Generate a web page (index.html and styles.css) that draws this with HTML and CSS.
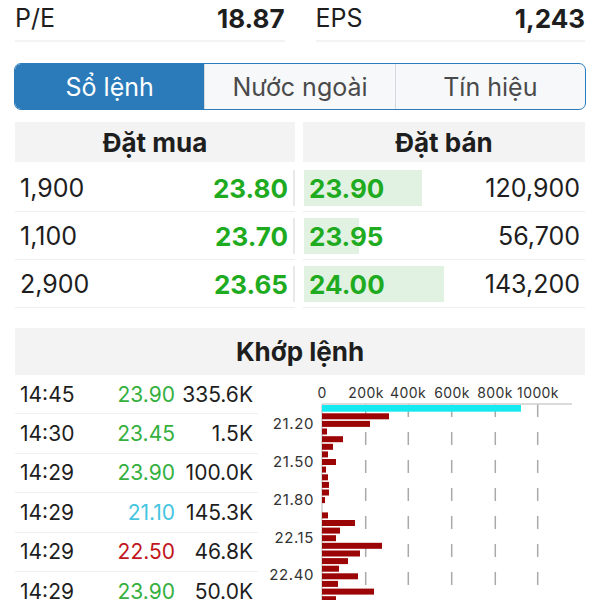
FILE: index.html
```html
<!DOCTYPE html>
<html>
<head lang="vi">
    <meta charset="UTF-8">
    <title>Sổ lệnh</title>
    <link rel="stylesheet" href="styles.css">
</head>
<body>
<div class="page">

    <div class="stats">
        <div class="stat"><span>P/E</span><span class="stat-value">18.87</span></div>
        <div class="stat"><span>EPS</span><span class="stat-value">1,243</span></div>
    </div>

    <div class="tabs">
        <div class="tab active">Sổ lệnh</div>
        <div class="tab">Nước ngoài</div>
        <div class="tab">Tín hiệu</div>
    </div>

    <div class="book">
        <div class="side buy">
            <div class="side-head">Đặt mua</div>
            <div class="book-row"><div class="cell"><span>1,900</span><span class="price">23.80</span></div></div>
            <div class="book-row"><div class="cell"><span>1,100</span><span class="price">23.70</span></div></div>
            <div class="book-row"><div class="cell"><span>2,900</span><span class="price">23.65</span></div></div>
        </div>
        <div class="side sell">
            <div class="side-head">Đặt bán</div>
            <div class="book-row"><div class="cell"><i class="fill" style="width: 41.9%"></i><span class="price">23.90</span><span>120,900</span></div></div>
            <div class="book-row"><div class="cell"><i class="fill" style="width: 19.6%"></i><span class="price">23.95</span><span>56,700</span></div></div>
            <div class="book-row"><div class="cell"><i class="fill" style="width: 49.6%"></i><span class="price">24.00</span><span>143,200</span></div></div>
        </div>
    </div>

    <div class="trades">
        <div class="trades-head">Khớp lệnh</div>
        <div class="trades-body">
            <div class="tape">
                <div class="trade"><span>14:45</span><span class="up">23.90</span><span>335.6K</span></div>
                <div class="trade"><span>14:30</span><span class="up">23.45</span><span>1.5K</span></div>
                <div class="trade"><span>14:29</span><span class="up">23.90</span><span>100.0K</span></div>
                <div class="trade"><span>14:29</span><span class="floor">21.10</span><span>145.3K</span></div>
                <div class="trade"><span>14:29</span><span class="down">22.50</span><span>46.8K</span></div>
                <div class="trade"><span>14:29</span><span class="up">23.90</span><span>50.0K</span></div>
            </div>

            <svg class="chart" width="315" height="225" viewBox="0 0 315 225">
                <g class="axis-label" text-anchor="middle">
                    <text x="52" y="23">0</text>
                    <text x="96" y="23">200k</text>
                    <text x="138" y="23">400k</text>
                    <text x="182" y="23">600k</text>
                    <text x="225" y="23">800k</text>
                    <text x="268" y="23">1000k</text>
                </g>
                <g class="grid">
                    <line x1="95.7" y1="29" x2="95.7" y2="225"/>
                    <line x1="138.3" y1="29" x2="138.3" y2="225"/>
                    <line x1="181.7" y1="29" x2="181.7" y2="225"/>
                    <line x1="225.3" y1="29" x2="225.3" y2="225"/>
                    <line x1="267.7" y1="29" x2="267.7" y2="225"/>
                </g>
                <line class="axis" x1="52" y1="29" x2="302" y2="29"/>
                <line class="axis" x1="52" y1="29" x2="52" y2="225"/>

                <rect class="bar-now" x="52" y="30" width="199" height="6.7"/>

                <g class="bars">
                    <rect x="52" y="38.3" width="67" height="6"/>
                    <rect x="52" y="45.9" width="48" height="6"/>
                    <rect x="52" y="53.5" width="5" height="6"/>
                    <rect x="52" y="61.2" width="21" height="6"/>
                    <rect x="52" y="68.8" width="11" height="6"/>
                    <rect x="52" y="76.4" width="6" height="6"/>
                    <rect x="52" y="84" width="14" height="6"/>
                    <rect x="52" y="91.6" width="4" height="6"/>
                    <rect x="52" y="99.3" width="6" height="6"/>
                    <rect x="52" y="106.9" width="7" height="6"/>
                    <rect x="52" y="114.5" width="7" height="6"/>
                    <rect x="52" y="122.1" width="3" height="6"/>
                    <rect x="52" y="137.4" width="6" height="6"/>
                    <rect x="52" y="145" width="33" height="6"/>
                    <rect x="52" y="152.6" width="18" height="6"/>
                    <rect x="52" y="160.2" width="14" height="6"/>
                    <rect x="52" y="167.8" width="60" height="6"/>
                    <rect x="52" y="175.5" width="38" height="6"/>
                    <rect x="52" y="183.1" width="26" height="6"/>
                    <rect x="52" y="190.7" width="17" height="6"/>
                    <rect x="52" y="198.3" width="36" height="6"/>
                    <rect x="52" y="205.9" width="16" height="6"/>
                    <rect x="52" y="213.6" width="52" height="6"/>
                    <rect x="52" y="221.2" width="14" height="6"/>
                </g>

                <g class="price-label" text-anchor="end">
                    <text x="44" y="54.3">21.20</text>
                    <text x="44" y="91.7">21.50</text>
                    <text x="44" y="130">21.80</text>
                    <text x="44" y="167.7">22.15</text>
                    <text x="44" y="205">22.40</text>
                </g>
            </svg>
        </div>
    </div>

</div>
</body>
</html>
```

FILE: styles.css
```css
*
{
    margin: 0;
    padding: 0;
    box-sizing: border-box;
}
body
{
    font-family: Inter, Roboto, "Liberation Sans", sans-serif;
    color: #1e1e1e;
    background: #fff;
    width: 600px;
    height: 600px;
    overflow: hidden;
}
.page
{
    padding: 0 15px;
}

/*----- P/E, EPS -----*/
.stats
{
    display: grid;
    grid-template-columns: 1fr 1fr;
    column-gap: 31px;
}
.stat
{
    display: flex;
    justify-content: space-between;
    align-items: center;
    height: 42px;
    padding-bottom: 4px;
    border-bottom: 2px solid #f3f3f3;
    font-size: 25px;
}
.stat-value
{
    font-weight: 700;
    font-size: 26px;
}

/*----- tabs -----*/
.tabs
{
    display: flex;
    height: 47px;
    margin: 21px -1px 0;
    border: 1px solid #2b7bbb;
    border-radius: 7px;
    overflow: hidden;
    background: #f6f8fa;
}
.tab
{
    flex: 1;
    display: flex;
    align-items: center;
    justify-content: center;
    font-size: 25px;
    color: #4a4a4a;
    border-left: 1px solid #d3d9df;
}
.tab:first-child
{
    border-left: 0;
}
.tab.active
{
    background: #2b7bbb;
    color: #fff;
}

/*----- order book -----*/
.book
{
    display: grid;
    grid-template-columns: 280px 282px;
    column-gap: 8px;
    margin-top: 12px;
}
.side-head,
.trades-head
{
    display: flex;
    align-items: center;
    justify-content: center;
    height: 40px;
    margin-bottom: 2px;
    background: #f3f3f3;
    font-size: 26px;
    font-weight: 700;
}
.book-row
{
    height: 48px;
    padding: 6px 0 5px;
    border-bottom: 1px solid #efefef;
}
.cell
{
    position: relative;
    display: flex;
    align-items: center;
    justify-content: space-between;
    height: 100%;
    padding: 0 5px;
    font-size: 25px;
}
.cell span
{
    position: relative;
}
.buy .cell
{
    border-right: 2px solid #e8e8e8;
}
.sell .cell
{
    padding-left: 6px;
}
.fill
{
    position: absolute;
    left: 1px;
    top: 0;
    bottom: 0;
    background: #e2f2e2;
}
.price
{
    font-weight: 700;
    font-size: 26px;
    color: #1fab1f;
}

/*----- matched orders -----*/
.trades
{
    margin-top: 20px;
}
.trades-head
{
    height: 47px;
    margin-bottom: 0;
}
.trades-body
{
    display: flex;
    gap: 12px;
}
.tape
{
    width: 243px;
    flex: none;
}
.trade
{
    display: grid;
    grid-template-columns: 80px 75px 78px;
    align-items: center;
    height: 39.4px;
    padding: 0 5px;
    border-bottom: 1px solid #efefef;
    font-size: 21px;
}
.trade span + span
{
    text-align: right;
}
.up
{
    color: #35b03f;
}
.down
{
    color: #c1161d;
}
.floor
{
    color: #44c6e0;
}

/*----- volume chart -----*/
.chart
{
    flex: none;
    display: block;
}
.axis-label,
.price-label
{
    font-family: Inter, Roboto, sans-serif;
    fill: #333;
}
.axis-label
{
    font-size: 14px;
    letter-spacing: 0.4px;
}
.price-label
{
    font-size: 15px;
    letter-spacing: 0.6px;
}
.grid line
{
    stroke: #a9a9a9;
    stroke-width: 1.5;
    stroke-dasharray: 13 15;
}
.axis
{
    stroke: #cfcfcf;
    stroke-width: 1.5;
}
.bar-now
{
    fill: #14eaf0;
}
.bars rect
{
    fill: #9c0505;
}
```
